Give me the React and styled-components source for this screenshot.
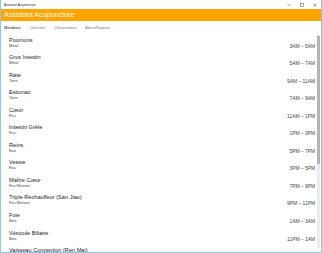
import React from "react";
import styled, { createGlobalStyle } from "styled-components";

const Global = createGlobalStyle`
  html, body { margin: 0; padding: 0; background: #ffffff; }
  * { box-sizing: border-box; }
  #root { width: 322px; height: 253px; }
`;

const Frame = styled.div`
  width: 322px;
  height: 253px;
  border: 1px solid #8cc8ee;
  border-top: none;
  display: flex;
  flex-direction: column;
  overflow: hidden;
  font-family: "Liberation Sans", Arial, sans-serif;
  background: #fff;
`;

const TitleBar = styled.div`
  height: 9px;
  display: flex;
  align-items: center;
  padding-left: 3px;
  background: #fff;
`;

const TitleText = styled.span`
  font-size: 3.2px;
  line-height: 4px;
  color: #222;
  flex: 1;
`;

const Controls = styled.div`
  display: flex;
  align-items: center;
  gap: 9px;
  padding-right: 4px;
`;

const Ctl = styled.svg`
  width: 4px;
  height: 4px;
  display: block;
`;

const Header = styled.div`
  height: 12px;
  background: #ffa500;
  display: flex;
  align-items: center;
  padding-left: 3px;
`;

const HeaderText = styled.span`
  color: #fff;
  font-size: 7.1px;
  line-height: 8px;
`;

const Tabs = styled.div`
  height: 12px;
  display: flex;
  align-items: center;
  gap: 8.5px;
  padding-left: 3px;
`;

const Tab = styled.span`
  font-size: 3.9px;
  line-height: 5px;
  color: ${(p) => (p.$active ? "#111" : "#808080")};
`;

const Body = styled.div`
  flex: 1;
  display: flex;
  min-height: 0;
`;

const List = styled.div`
  flex: 1;
  padding-top: 2.5px;
  padding-left: 8px;
  padding-right: 1px;
  overflow: hidden;
`;

const Row = styled.div`
  height: 17.55px;
  display: grid;
  grid-template-columns: 1fr auto;
  grid-template-rows: 7px 5px;
  padding-top: 1px;
`;

const Name = styled.div`
  font-size: 5.6px;
  line-height: 7px;
  color: #222;
  grid-column: 1;
  grid-row: 1;
  white-space: nowrap;
`;

const Sub = styled.div`
  font-size: 3.8px;
  line-height: 5px;
  color: #444;
  grid-column: 1;
  grid-row: 2;
`;

const Time = styled.div`
  font-size: 4.9px;
  line-height: 5px;
  color: #444;
  grid-column: 2;
  grid-row: 2;
  align-self: center;
  white-space: nowrap;
`;

const Scroll = styled.div`
  width: 4px;
  padding: 1px 0.5px 2px 0.5px;
  display: flex;
  flex-direction: column;
  align-items: center;
  margin-right: 1px;
`;

const Arrow = styled.div`
  width: 0;
  height: 0;
  border-left: 1px solid transparent;
  border-right: 1px solid transparent;
  border-bottom: 1.5px solid ${(p) => p.$c || "#9a9a9a"};
  transform: ${(p) => (p.$down ? "rotate(180deg)" : "none")};
  margin: 0.5px 0;
`;

const Track = styled.div`
  flex: 1;
  width: 3px;
  background: #ececec;
  display: flex;
  flex-direction: column;
`;

const Thumb = styled.div`
  height: 128px;
  width: 3px;
  background: #b4b4b4;
`;

const items = [
  ["Poumons", "Métal", "3AM – 5AM"],
  ["Gros Intestin", "Métal", "5AM – 7AM"],
  ["Rate", "Terre", "9AM – 11AM"],
  ["Estomac", "Terre", "7AM – 9AM"],
  ["Cœur", "Feu", "11AM – 1PM"],
  ["Intestin Grêle", "Feu", "1PM – 3PM"],
  ["Reins", "Eau", "5PM – 7PM"],
  ["Vessie", "Eau", "3PM – 5PM"],
  ["Maître Cœur", "Feu Ministre", "7PM – 9PM"],
  ["Triple Réchauffeur (San Jiao)", "Feu Ministre", "9PM – 11PM"],
  ["Foie", "Bois", "1AM – 3AM"],
  ["Vésicule Biliaire", "Bois", "11PM – 1AM"],
  ["Vaisseau Conception (Ren Mai)", "", ""],
];

export default function App() {
  return (
    <>
      <Global />
      <Frame>
        <TitleBar>
          <TitleText>Assistant Acupuncture</TitleText>
          <Controls>
            <Ctl viewBox="0 0 4 4">
              <line x1="0.5" y1="2" x2="3.5" y2="2" stroke="#444" strokeWidth="0.5" />
            </Ctl>
            <Ctl viewBox="0 0 4 4">
              <rect x="0.6" y="0.6" width="2.8" height="2.8" fill="none" stroke="#444" strokeWidth="0.5" />
            </Ctl>
            <Ctl viewBox="0 0 4 4">
              <path d="M0.6 0.6 L3.4 3.4 M3.4 0.6 L0.6 3.4" stroke="#444" strokeWidth="0.5" />
            </Ctl>
          </Controls>
        </TitleBar>
        <Header>
          <HeaderText>Assistant Acupuncture</HeaderText>
        </Header>
        <Tabs>
          <Tab $active>Meridians</Tab>
          <Tab>Chercher</Tab>
          <Tab>Chronomètre</Tab>
          <Tab>About/Support</Tab>
        </Tabs>
        <Body>
          <List>
            {items.map(([n, s, t]) => (
              <Row key={n}>
                <Name>{n}</Name>
                <Sub>{s}</Sub>
                <Time>{t}</Time>
              </Row>
            ))}
          </List>
          <Scroll>
            <Arrow />
            <Track>
              <Thumb />
            </Track>
            <Arrow $down $c="#cfcfcf" />
          </Scroll>
        </Body>
      </Frame>
    </>
  );
}
